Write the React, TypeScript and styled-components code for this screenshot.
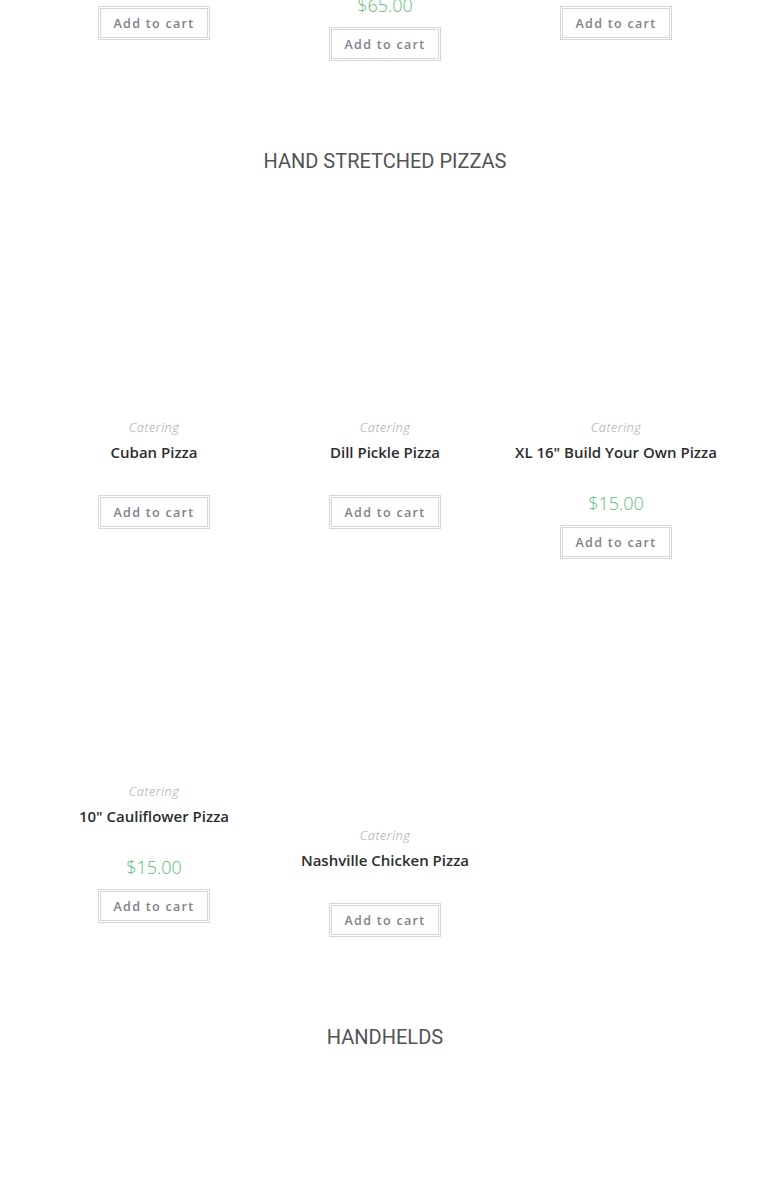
import * as React from 'react'
import styled, { createGlobalStyle } from 'styled-components'

const GlobalStyle = createGlobalStyle`
  html, body {
    margin: 0;
    padding: 0;
    background: #fff;
    overflow: hidden;
  }
`

const Page = styled.div`
  width: 770px;
  height: 1199px;
  overflow: hidden;
`

const Section = styled.section<{ $top?: number }>`
  padding-top: ${p => (p.$top !== undefined ? p.$top : 85)}px;
`

// tail of the previous category, scrolled partly out of view
const TailSection = styled.section`
  margin-top: -36px;
`

const Heading = styled.h2`
  margin: 0 0 20px;
  font-family: Roboto, "Liberation Sans", sans-serif;
  font-weight: 400;
  font-size: 20px;
  line-height: 30px;
  text-align: center;
  text-transform: uppercase;
  color: #515355;
`

const Grid = styled.div`
  width: 693px;
  margin: 0 auto;
  display: grid;
  grid-template-columns: repeat(3, 1fr);
  row-gap: 20px;
  align-items: start;
`

const Card = styled.div`
  display: flex;
  flex-direction: column;
  align-items: center;
  text-align: center;
`

const Thumb = styled.div<{ $h: number }>`
  width: 100%;
  height: ${p => p.$h}px;
  background: #fff;
`

const Category = styled.span`
  display: block;
  font-family: "Open Sans", sans-serif;
  font-style: italic;
  font-weight: 300;
  font-size: 13px;
  letter-spacing: 0.4px;
  line-height: 20px;
  color: #a5a5a5;
`

const Title = styled.h3`
  margin: 5px 0 0;
  font-family: "Open Sans", sans-serif;
  font-weight: 600;
  font-size: 15px;
  line-height: 20px;
  color: #2d2d2d;
  white-space: nowrap;
`

const Price = styled.span`
  display: block;
  margin: 28px 0 9px;
  font-family: "Open Sans", sans-serif;
  font-weight: 300;
  font-size: 18px;
  line-height: 26px;
  color: #62bb78;
`

const Gap = styled.div`
  height: 33px;
`

const CartButton = styled.button`
  box-sizing: border-box;
  width: 112px;
  height: 34px;
  padding: 0;
  background: #fff;
  border: 3px double #d6d6d6;
  font-family: "Open Sans", sans-serif;
  font-weight: 600;
  font-size: 12.5px;
  letter-spacing: 1.3px;
  color: #83818b;
  cursor: pointer;
`

type Product = {
  name: string
  price?: string
  img: number
}

const ProductCard = ({ name, price, img }: Product) => (
  <Card>
    <Thumb $h={img} />
    <Category>Catering</Category>
    <Title>{name}</Title>
    {price ? <Price>{price}</Price> : <Gap />}
    <CartButton>Add to cart</CartButton>
  </Card>
)

// only the bottom of these cards is on screen
const TailCard = ({ price, img }: { price?: string; img: number }) => (
  <Card>
    <Thumb $h={img} />
    {price && <Price>{price}</Price>}
    <CartButton>Add to cart</CartButton>
  </Card>
)

const pizzas: Product[] = [
  { name: 'Cuban Pizza', img: 221 },
  { name: 'Dill Pickle Pizza', img: 221 },
  { name: 'XL 16" Build Your Own Pizza', price: '$15.00', img: 221 },
  { name: '10" Cauliflower Pizza', price: '$15.00', img: 202 },
  { name: 'Nashville Chicken Pizza', img: 246 },
]

export default function App() {
  return (
    <Page>
      <GlobalStyle />
      <TailSection>
        <Grid>
          <TailCard img={42} />
          <TailCard img={0} price="$65.00" />
          <TailCard img={42} />
        </Grid>
      </TailSection>

      <Section>
        <Heading>Hand Stretched Pizzas</Heading>
        <Grid>
          {pizzas.map(p => <ProductCard key={p.name} {...p} />)}
        </Grid>
      </Section>

      <Section>
        <Heading>Handhelds</Heading>
        <Grid>
          <Thumb $h={200} />
        </Grid>
      </Section>
    </Page>
  )
}
